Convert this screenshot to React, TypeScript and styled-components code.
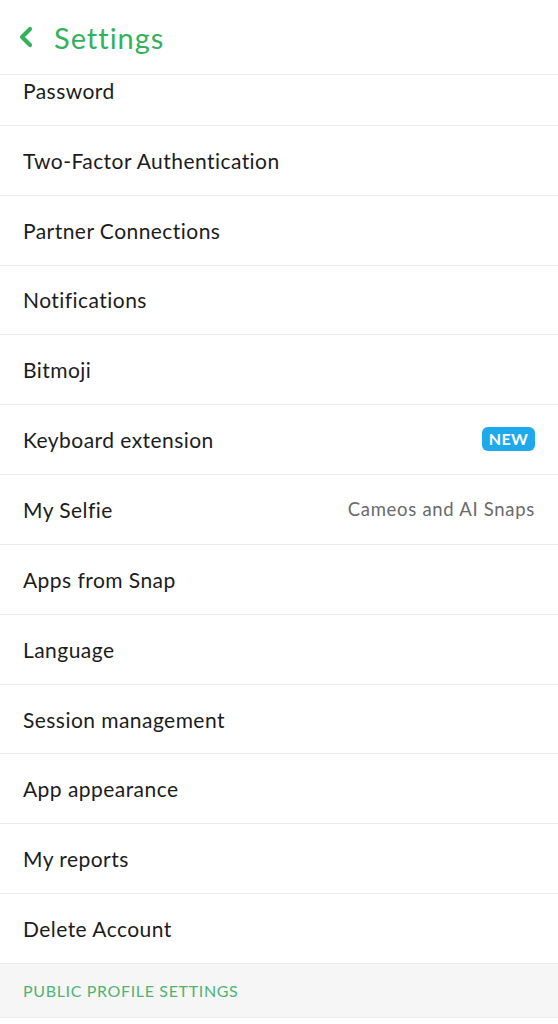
import React from "react";
import styled, { createGlobalStyle } from "styled-components";

const Global = createGlobalStyle`
  html, body { margin: 0; padding: 0; background: #ffffff; }
  body { font-family: Lato, "Open Sans", sans-serif; -webkit-font-smoothing: antialiased; }
  * { box-sizing: border-box; }
`;

const Page = styled.div`
  width: 558px;
  height: 1024px;
  overflow: hidden;
  background: #ffffff;
  display: flex;
  flex-direction: column;
`;

const Header = styled.header`
  position: sticky;
  top: 0;
  z-index: 2;
  height: 75px;
  flex: none;
  background: #ffffff;
  border-bottom: 1px solid #ececec;
  display: flex;
  align-items: center;
  gap: 20px;
  padding: 0 0 0 18px;
`;

const Title = styled.h1`
  margin: 0;
  font-size: 29px;
  font-weight: 400;
  color: #33b15c;
  letter-spacing: 1px;
`;

const List = styled.div`
  margin-top: -19px;
  display: flex;
  flex-direction: column;
`;

const Row = styled.div`
  height: 69.85px;
  flex: none;
  display: flex;
  align-items: center;
  justify-content: space-between;
  padding: 0 23px 0 23px;
  border-bottom: 1px solid #ececec;
`;

const Label = styled.span`
  font-size: 21px;
  color: #1c1c1c;
  letter-spacing: 0.45px;
`;

const Detail = styled.span`
  font-size: 18.5px;
  color: #6a6a6a;
  letter-spacing: 0.7px;
`;

const Badge = styled.span`
  background: #1ea9ec;
  color: #ffffff;
  font-weight: 700;
  font-size: 16px;
  border-radius: 6px;
  padding: 3px 7px;
  line-height: 18px;
  letter-spacing: 0.3px;
  margin-top: -2px;
`;

const Section = styled.div`
  height: 54px;
  flex: none;
  display: flex;
  align-items: center;
  padding: 0 23px;
  background: #f5f6f5;
  border-bottom: 1px solid #ececec;
  font-size: 16px;
  color: #4fb374;
  letter-spacing: 0.65px;
`;

type Item = { label: string; detail?: string; badge?: string };

const items: Item[] = [
  { label: "Password" },
  { label: "Two-Factor Authentication" },
  { label: "Partner Connections" },
  { label: "Notifications" },
  { label: "Bitmoji" },
  { label: "Keyboard extension", badge: "NEW" },
  { label: "My Selfie", detail: "Cameos and AI Snaps" },
  { label: "Apps from Snap" },
  { label: "Language" },
  { label: "Session management" },
  { label: "App appearance" },
  { label: "My reports" },
  { label: "Delete Account" },
];

const Back = () => (
  <svg width="16" height="22" viewBox="0 0 16 22" aria-hidden="true">
    <path d="M12 3 L4 11 L12 19" fill="none" stroke="#33b15c" strokeWidth="4.2" strokeLinecap="round" strokeLinejoin="round" />
  </svg>
);

export default function App() {
  return (
    <Page>
      <Global />
      <Header>
        <Back />
        <Title>Settings</Title>
      </Header>
      <List>
        {items.map((it) => (
          <Row key={it.label}>
            <Label>{it.label}</Label>
            {it.detail && <Detail>{it.detail}</Detail>}
            {it.badge && <Badge>{it.badge}</Badge>}
          </Row>
        ))}
        <Section>PUBLIC PROFILE SETTINGS</Section>
      </List>
    </Page>
  );
}
